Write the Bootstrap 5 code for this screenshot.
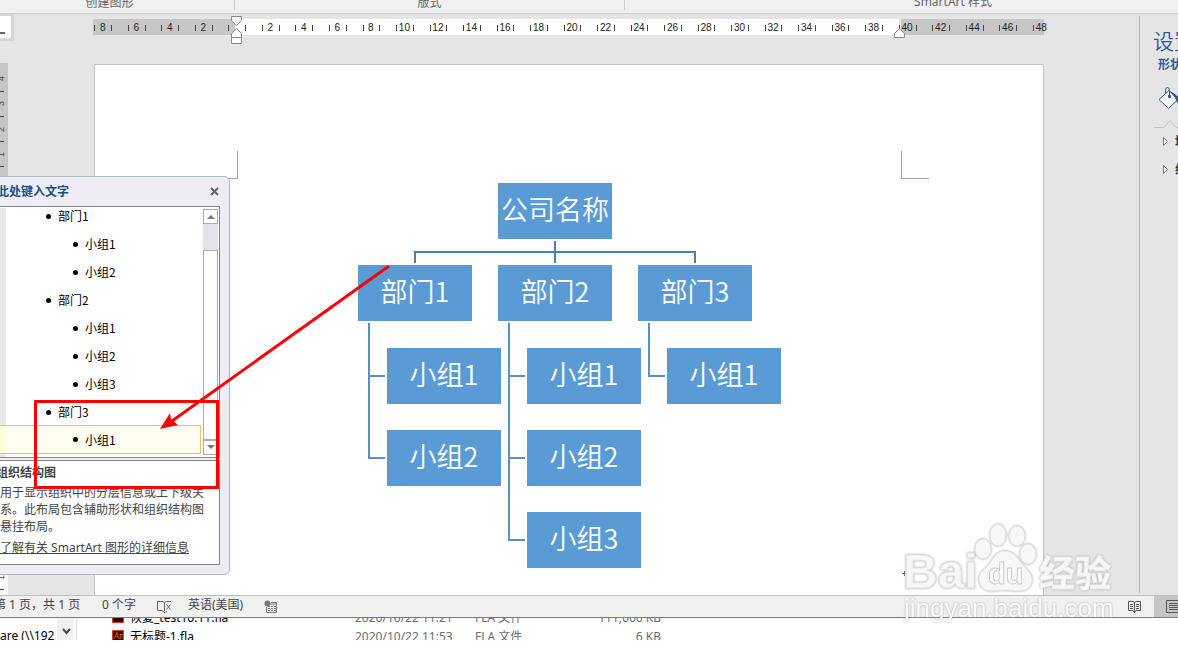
<!DOCTYPE html>
<html lang="zh-CN">
<head>
<meta charset="utf-8">
<meta name="viewport" content="width=device-width, initial-scale=1">
<title>SmartArt</title>
<link href="https://cdn.jsdelivr.net/npm/bootstrap@5.3.0/dist/css/bootstrap.min.css" rel="stylesheet">
<style>
body{font:12px/16px "Noto Sans CJK SC",sans-serif;color:#444;background:#fff;overflow:hidden}
.ribbon{height:14px;background:#f0f0f0;border-bottom:1px solid #d0d0d0;line-height:16px;color:#666}
.ribbon-group{height:10px;border-right:1px solid #ccc;display:flex;justify-content:center;align-items:flex-end;white-space:nowrap}
.group-create{width:235px;padding-right:15px}
.group-layout{width:390px}
.group-styles{padding-left:103px;font-family:"Noto Sans","Noto Sans CJK SC",sans-serif}
.workspace{background:#e5e5e5}
.ruler-left{width:8px;flex:none}
.tab-pick{width:14px;height:27px;border:solid #d6d6d6;border-width:2px 3px 3px 0;background:#fff;display:flex;align-items:center;padding-top:12px}
.tab-pick i{width:5px;height:2px;background:#666}
.vruler{margin-top:22px;background:#c6c6c6;overflow:hidden;font:9px/10px "Liberation Sans",sans-serif}
.vruler svg{display:block}
.doc{padding:5px 95px 0 85px}
.hruler{height:16px;background:linear-gradient(90deg,#c6c6c6 142px,#fff 142px,#fff calc(100% - 145px),#e5e5e5 calc(100% - 145px),#e5e5e5 calc(100% - 143px),#c6c6c6 calc(100% - 143px))}
.ticks{margin:0 -14px 0 -7px;display:flex;height:16px}
.tick{flex:1 1 0;display:flex;justify-content:center;align-items:center;position:relative;font:10px/16px "Liberation Sans",sans-serif;color:#222;padding-top:2px}
.tick::before,.tick::after{content:"";position:absolute;left:25%;top:6px;width:1px;height:6px;background:#444}
.tick::after{left:75%}
.tick:last-child::after{display:none}
.indent{position:absolute;left:11px;top:-3px;z-index:2}
.indent-right{position:absolute;left:4px;top:9px;z-index:2}
.sheet{margin:29px 0 0 1px;background:#fff;border:1px solid #c3c3c3;border-bottom:0;padding-top:86px;padding-bottom:27px;position:relative}
.crops{height:28px;padding:0 114px 0 115px}
.crop{width:28px;border:solid #a6a6a6;border-width:0 1px 1px 0}
.crop-r{border-width:0 0 1px 1px}
.chart{width:422px;margin:4px auto 0;color:#fff;font-size:27px;font-weight:350;line-height:52px}
.node{width:114px;height:56px;background:#5b9bd5;text-align:center;white-space:nowrap}
.root-node{margin-left:140px}
.branches{margin-top:26px}
.branch{width:140px;flex:none}
.leaves{margin:27px 0 0 29px;display:grid;gap:26px}
.links{left:0;top:0;overflow:visible}
.pilcrow{right:134px;bottom:18px}
.pane{width:39px;flex:none;padding-left:14px;margin-top:2px;overflow:hidden;white-space:nowrap;border-left:1px solid #b8b8b8;margin-bottom:2px}
.pane h2{font-size:21px;line-height:26px;color:#2b579a;margin:11px 0 0 -1px;font-weight:350}
.pane h3{font-size:12px;line-height:16px;color:#2b579a;margin:3px 0 0 4px;font-weight:700}
.pane button{border:0;background:none;padding:0;display:block;margin-top:15px}
.sect{font-weight:700;font-size:12px;line-height:16px;color:#333}
.textpane{left:-4px;top:162px;width:234px;height:399px;background:#eeedf5;border:1px solid #a9b9bf;border-radius:0 6px 6px 0;padding:29px 9px 9px 0;color:#444}
.textpane .cap{left:0;top:6px;color:#1f4e86;font-weight:700}
.closer{right:10px;top:10px;border:0;background:none;padding:0;line-height:0}
.listbox{height:252px;border:1px solid #858585;border-left:0;background:#fff;overflow:hidden;padding-left:3px;display:flex}
.gut{width:6px;background:#eaeaea;flex:none;margin-top:1px}
.items{margin:-5px 2px 0 -6px;padding:0;list-style:none;flex:1;color:#000}
.items li{height:28px;line-height:28px;padding-left:46px;display:flex;align-items:center}
.items li::before{content:"";width:5px;height:5px;border-radius:50%;background:#000;margin-right:7px}
.items .sub{padding-left:73px}
.items .on{background:linear-gradient(90deg,#fffcdc 5px,#fffef0 5px);border:1px solid #fb5;border-left:0;height:29px;margin-top:-1px}
.sbar{width:15px;margin:2px 1px 2px 0;background:#e3e2ea;display:flex;flex-direction:column}
.sbar button{height:15px;border:1px solid #ababab;background:#fff;padding:0;line-height:0;flex:none}
.thumb{margin-top:26px;flex:1;background:#fff;border:1px solid #ababab}
.desc{margin-top:2px;height:105px;border:1px solid #858585;border-left:0;background:#fff;padding:2px 0 0 3px;line-height:17px;white-space:nowrap}
.desc p,.desc h4{margin:0;font-size:12px;line-height:17px}
.desc h4{font-weight:700;margin:0 0 3px -4px}
.desc a{display:inline-block;color:#444;margin-top:5px;font-family:"Noto Sans","Noto Sans CJK SC",sans-serif}
.redbox{left:34px;top:386px;width:185px;height:89px;border:3px solid #f00}
.arrow{left:158px;top:250px}
.status{height:23px;background:#f0f0f0;border-top:1px solid #bdbdbd;border-bottom:1px solid #7d7d7d;line-height:18px;white-space:nowrap;overflow:hidden;font-family:"Noto Sans","Noto Sans CJK SC",sans-serif}
.status div{padding-bottom:3px}
.status button{border:0;padding:0;background:none;display:flex;align-items:center}
.status .pages{margin-left:-6px;width:108px}
.status .words{width:55px}
.status .proof{width:31px}
.status .lang{width:76px}
.status .read{width:26px}
.status .print{width:24px;background:#c6c6c6;padding-left:12px;overflow:hidden;align-self:stretch}
.explorer{height:22px;overflow:hidden;white-space:nowrap;color:#6d6d6d}
.tree{width:57px;color:#000;padding-top:9px;flex:none;line-height:18px;font-family:"Noto Sans","Noto Sans CJK SC",sans-serif}
.drop{width:16px;border:0;background:#f0f0f0;padding:4px 0 0 2px;flex:none;line-height:0}
.files{margin:-10px 0 0 35px;width:549px;table-layout:fixed;border-left:0;font-family:"Noto Sans","Noto Sans CJK SC",sans-serif;flex:none;height:38px}
.files td{padding:0;height:19px;line-height:19px}
.files .fn{color:#000;width:243px}
.files .dt{width:120px}
.files svg{vertical-align:-2px;margin-right:5px}
.wm{right:61px;top:518px;pointer-events:none;z-index:9;filter:drop-shadow(0 0 1px #aaa)}
</style>
</head>
<body>
<div class="position-relative overflow-hidden">
<header class="ribbon d-flex overflow-hidden">
  <div class="ribbon-group group-create"><span>创建图形</span></div>
  <div class="ribbon-group group-layout"><span>版式</span></div>
  <div class="ribbon-group group-styles flex-grow-1 border-0"><span>SmartArt 样式</span></div>
</header>

<main class="workspace d-flex position-relative overflow-hidden">
  <div class="ruler-left d-flex flex-column">
    <div class="tab-pick"><i></i></div>
    <div class="vruler flex-grow-1">
      <svg width="8" height="532"><path fill="#fff" d="M0 200h8v332H0z"/><path stroke="#444" d="M0 28.500h4M0 53.500h4M0 78.500h4M0 103.500h4M0 526.500h4"/><g fill="#444" font-size="9"><text transform="translate(4 18) rotate(-90)">4</text><text transform="translate(4 43) rotate(-90)">3</text><text transform="translate(4 69) rotate(-90)">2</text><text transform="translate(4 94) rotate(-90)">1</text><text transform="translate(4 517) rotate(-90)">15</text></g></svg>
    </div>
  </div>

  <div class="doc flex-grow-1">
    <div class="hruler"><div class="ticks">
      <div class="tick">8</div><div class="tick">6</div><div class="tick">4</div><div class="tick">2</div>
      <div class="tick"><svg class="indent" width="12" height="29" fill="#fff" stroke="#888"><path d="M.5.500h10v4l-5 5-5-5zM.5 27.500v-10l5-5 5 5v10zM.5 21.500h10"/></svg></div>
      <div class="tick">2</div><div class="tick">4</div><div class="tick">6</div><div class="tick">8</div><div class="tick">10</div><div class="tick">12</div><div class="tick">14</div><div class="tick">16</div><div class="tick">18</div><div class="tick">20</div><div class="tick">22</div><div class="tick">24</div><div class="tick">26</div><div class="tick">28</div><div class="tick">30</div><div class="tick">32</div><div class="tick">34</div><div class="tick">36</div><div class="tick">38</div>
      <div class="tick">40<svg class="indent-right" width="12" height="10" fill="#fff" stroke="#888"><path d="M.5 9.500v-4l5-5 5 5v4z"/></svg></div>
      <div class="tick">42</div><div class="tick">44</div><div class="tick">46</div><div class="tick">48</div>
    </div></div>

    <div class="sheet">
      <div class="crops d-flex justify-content-between"><div class="crop"></div><div class="crop crop-r"></div></div>
      <div class="chart position-relative">
        <svg class="links position-absolute" width="424" height="385" fill="none" stroke="#4a7fb3" stroke-width="2"><path d="M197 58v22M57 80V69h280v11"/><path stroke="#5b8fc4" d="M11 140v135h16M11 193h16M151 140v217h16M151 193h16M151 275h16M291 140v53h16"/></svg>
        <div class="node root-node">公司名称</div>
        <div class="branches d-flex">
          <div class="branch"><div class="node">部门1</div>
            <div class="leaves"><div class="node">小组1</div><div class="node">小组2</div></div></div>
          <div class="branch"><div class="node">部门2</div>
            <div class="leaves"><div class="node">小组1</div><div class="node">小组2</div><div class="node">小组3</div></div></div>
          <div class="branch"><div class="node">部门3</div>
            <div class="leaves"><div class="node">小组1</div></div></div>
        </div>
      </div>
      <svg class="pilcrow position-absolute" width="8" height="9" fill="none" stroke="#666"><path d="M1 5.500h4M3.500 3v5"/><path stroke="#bbb" d="M6.500 1v4"/></svg>
    </div>
  </div>

  <aside class="pane">
    <h2>设置</h2>
    <h3>形状</h3>
    <button type="button" aria-label="填充"><svg class="ms-1" width="26" height="24" fill="#fff" stroke="#2b579a"><path d="M1 12.500L11 3.500l9 9-9.500 9z"/><path fill="none" d="M7.500 7V3.500q0-3 2-3t2 3V9"/><path fill="#2b579a" d="M13 5l7 5v6l-3-6zM10.500 8.500h2v2h-2z"/></svg></button>
    <svg class="d-block mt-2" width="25" height="10" fill="none" stroke="#c3c3c3"><path d="M0 8.500h10l6-7 6 7h3"/></svg>
    <div class="sect d-flex align-items-center mt-1"><svg width="21" height="9" class="flex-shrink-0" fill="#fff" stroke="#777"><path d="M9.500.500v8l4-4z"/></svg>填充</div>
    <div class="sect d-flex align-items-center pt-1 mt-2"><svg width="21" height="9" class="flex-shrink-0" fill="#fff" stroke="#777"><path d="M9.500.500v8l4-4z"/></svg>线条</div>
  </aside>

  <section class="textpane position-absolute">
    <div class="cap position-absolute">此处键入文字</div>
    <button type="button" class="closer position-absolute" aria-label="关闭"><svg width="9" height="9" stroke="#666" stroke-width="2"><path d="M1 1l7 7M8 1L1 8"/></svg></button>
    <div class="listbox">
      <div class="gut"></div>
      <ul class="items">
        <li>部门1</li><li class="sub">小组1</li><li class="sub">小组2</li>
        <li>部门2</li><li class="sub">小组1</li><li class="sub">小组2</li><li class="sub">小组3</li>
        <li>部门3</li><li class="sub on">小组1</li>
      </ul>
      <div class="sbar">
        <button type="button" aria-label="向上"><svg width="8" height="5" fill="#777"><path d="M0 5h8L4 1z"/></svg></button>
        <div class="thumb"></div>
        <button type="button" aria-label="向下"><svg width="8" height="5" fill="#777"><path d="M0 0h8L4 4z"/></svg></button>
      </div>
    </div>
    <div class="desc">
      <h4>组织结构图</h4>
      <p>用于显示组织中的分层信息或上下级关<br>系。此布局包含辅助形状和组织结构图<br>悬挂布局。</p>
      <a href="#">了解有关 SmartArt 图形的详细信息</a>
    </div>
  </section>
  <div class="redbox position-absolute"></div>
  <svg class="arrow position-absolute" width="234" height="170"><path d="M231 2L14 157" stroke="#f00" stroke-width="3"/><path fill="#f00" d="M2 165l10-16 1 6 7 6z"/></svg>
</main>

<footer class="status d-flex align-items-center">
  <div class="pages">第 1 页，共 1 页</div>
  <div class="words">0 个字</div>
  <button type="button" class="proof" aria-label="校对"><svg width="16" height="14" fill="none" stroke="#666"><path d="M7.500 3v8M7.500 2.500L5 1.500H.500v9H5l2.500 2 2.500-1M7.500 2.500l2-1H14M9.500 4.500l4 5M13.500 4.500l-4 5"/></svg></button>
  <div class="lang">英语(美国)</div>
  <button type="button" aria-label="宏"><svg width="14" height="14"><circle cx="3.500" cy="3.500" r="3" fill="#777"/><path fill="none" stroke="#777" d="M2.500 7v5.500h10v-10H7M7 4h6"/><path stroke="#777" stroke-dasharray="2 1" d="M4 6.500h8M4 8.500h8M4 10.500h8"/></svg></button>
  <button type="button" class="read ms-auto" aria-label="阅读视图"><svg width="14" height="14" fill="none" stroke="#555"><path d="M6.500 2v11M.5 1.500H5l1.500 1 1.500-1h4.500v9H8l-1.500 2-1.500-2H.500zM2 4.500h3M2 6.500h3M2 8.500h3M8 4.500h3M8 6.500h3M8 8.500h3"/></svg></button>
  <button type="button" class="print" aria-label="页面视图"><svg width="16" height="14" class="flex-shrink-0" fill="none" stroke="#555"><path d="M.5.500h14v12H.500zM3 3.500h9M3 5.500h9M3 7.500h9M3 9.500h9"/></svg></button>
</footer>

<section class="explorer d-flex">
  <div class="tree">are (\\192</div>
  <button type="button" class="drop" aria-label="展开"><svg width="9" height="7" fill="none" stroke="#444" stroke-width="2"><path d="M1 1l3.500 4L8 1"/></svg></button>
  <div class="border-end" style="width:4px"></div>
  <table class="files">
    <tr><td class="fn"><svg width="13" height="13"><path fill="#2a0800" stroke="#e8371c" d="M.5.500h11v11H.500z"/></svg>恢复_test10.11.fla</td><td class="dt">2020/10/22 11:21</td><td>FLA 文件</td><td class="text-end">111,666 KB</td></tr>
    <tr><td class="fn"><svg width="13" height="13"><path fill="#2a0800" stroke="#e8371c" d="M.5.500h11v11H.500z"/><text x="2" y="9" font-size="8" fill="#ff5a3c">An</text></svg>无标题-1.fla</td><td class="dt">2020/10/22 11:53</td><td>FLA 文件</td><td class="text-end">6 KB</td></tr>
  </table>
</section>

<svg class="wm position-absolute" width="215" height="108" aria-hidden="true" fill="#fff" fill-opacity=".9" stroke="#e2e2e2" stroke-linejoin="round">
  <text x="1" y="70" font-family="Liberation Sans,sans-serif" font-weight="700" font-size="48">Bai</text>
  <ellipse cx="81" cy="31" rx="8" ry="10"/><ellipse cx="96" cy="17" rx="8" ry="11"/><ellipse cx="115" cy="18" rx="8" ry="10"/><ellipse cx="126" cy="36" rx="8" ry="10"/>
  <path d="M103 33c8 0 13 7 17 13 5 6 11 10 10 17-1 8-8 10-14 10-5 0-8-1-13-1s-8 1-13 1c-7 0-13-4-13-12 0-7 7-10 11-16 4-7 8-12 15-12z"/>
  <text x="86" y="66" font-family="Liberation Sans,sans-serif" font-size="29" font-weight="700" stroke="#ccc">du</text>
  <text x="137" y="69" font-family="Noto Sans CJK SC,sans-serif" font-size="36" font-weight="700" stroke="#eee">经验</text>
  <text x="2" y="99" font-family="Liberation Sans,sans-serif" font-size="26" stroke="none">jingyan.baidu.com</text>
</svg>
</div>
<script src="https://cdn.jsdelivr.net/npm/bootstrap@5.3.0/dist/js/bootstrap.bundle.min.js"></script>
</body>
</html>
